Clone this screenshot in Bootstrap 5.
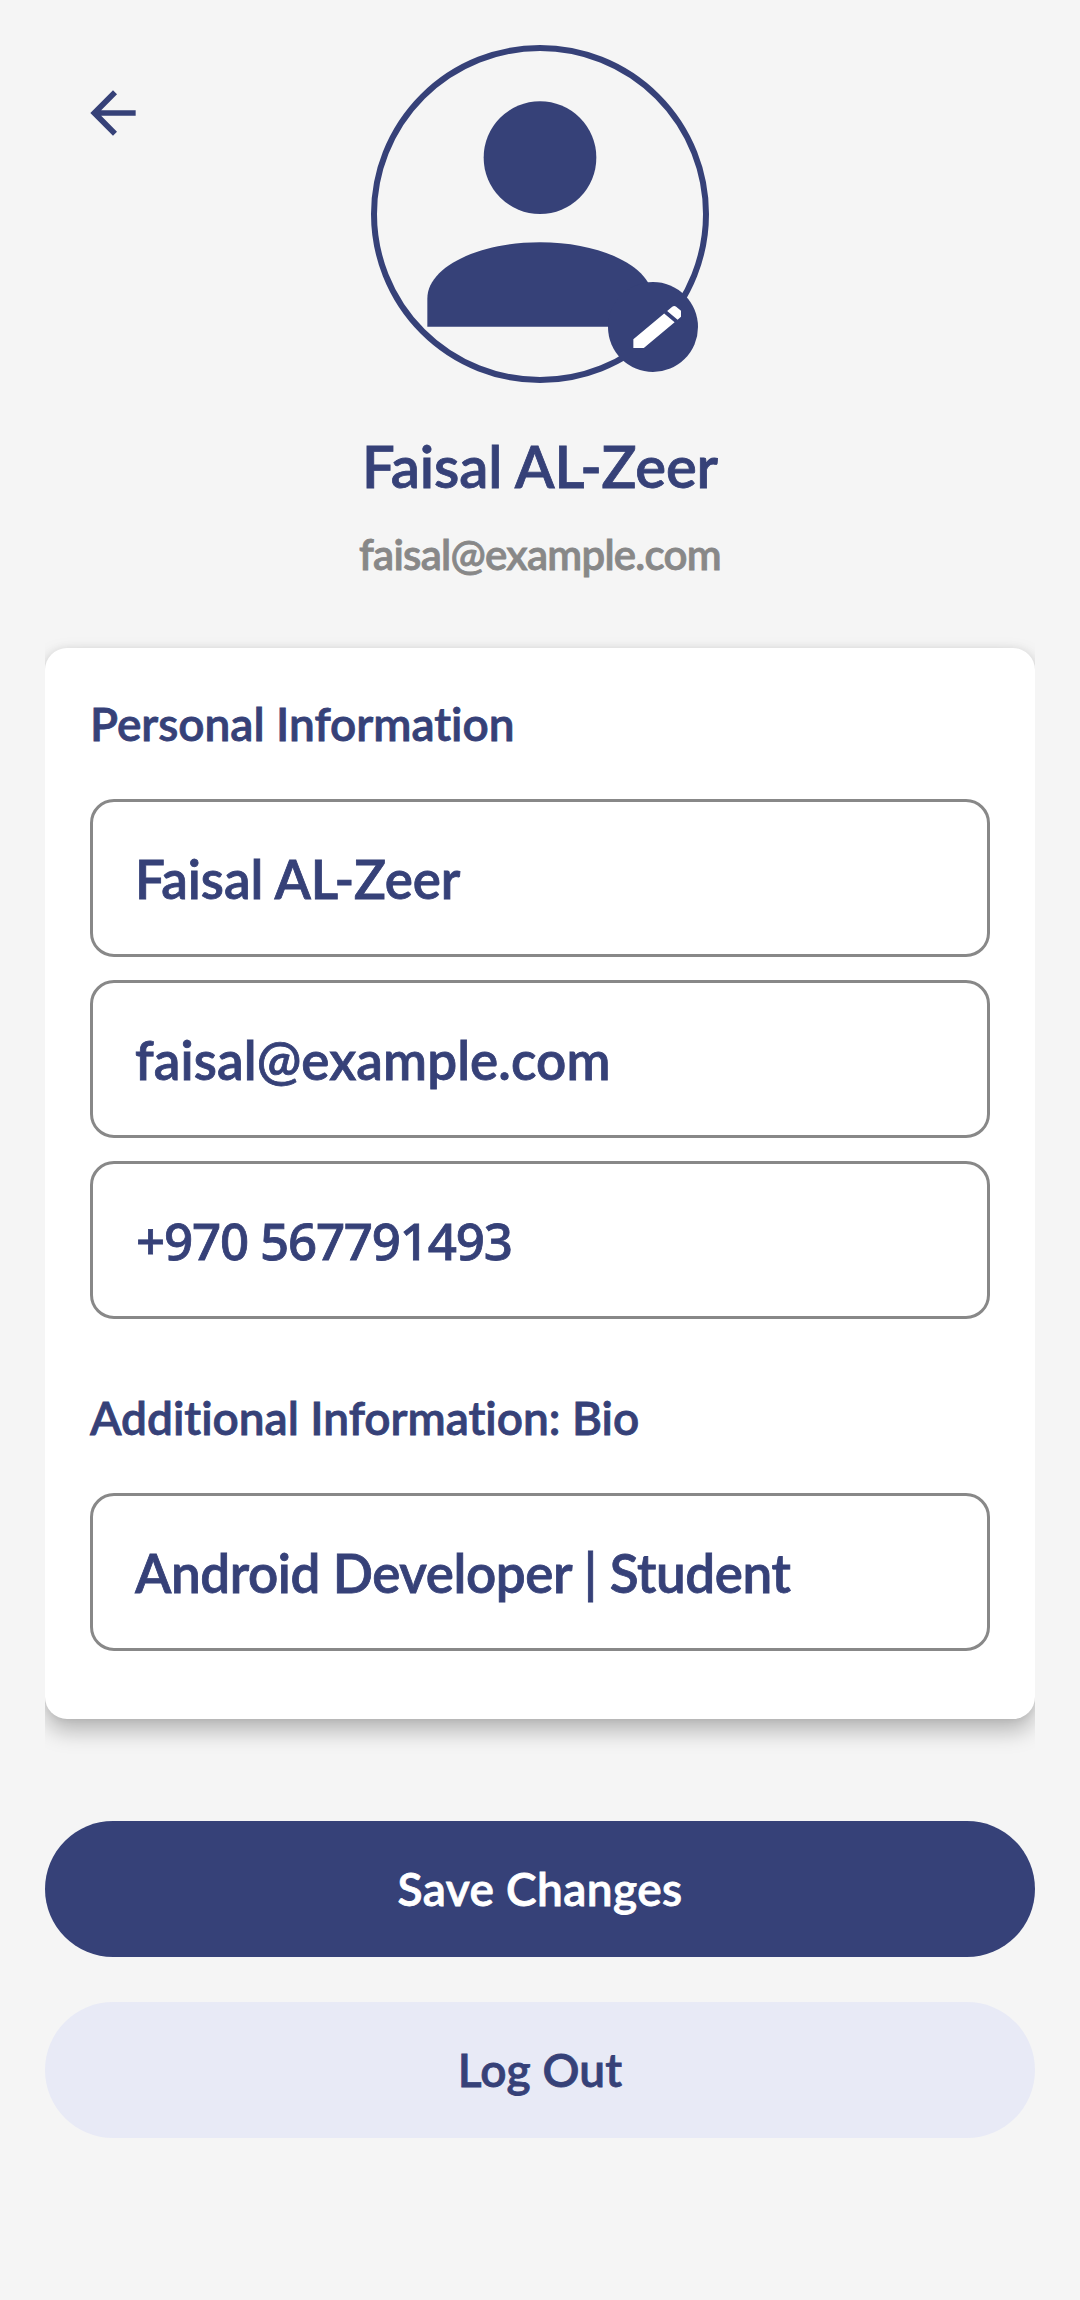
<!DOCTYPE html>
<html lang="en">
<head>
<meta charset="utf-8">
<meta name="viewport" content="width=device-width, initial-scale=1">
<title>Profile</title>
<link href="https://cdn.jsdelivr.net/npm/bootstrap@5.3.0/dist/css/bootstrap.min.css" rel="stylesheet">
<style>
:root { --navy: #364178; --muted: #888; }
body { background: #f5f5f5; color: var(--navy); font-family: Lato, "Noto Sans", sans-serif; font-weight: 600; font-variant-ligatures: none; -webkit-text-stroke: .8px; }
.screen { width: 1080px; height: 2300px; padding: 45px 45px 0; }
svg { display: block; }
.back-btn { top: 34px; left: 34px; padding: 45px; }
.avatar { width: 338px; height: 338px; border: 6px solid var(--navy); }
.avatar > svg { margin: -6px; }
.back-btn svg, .avatar-box svg { -webkit-text-stroke: 0; }
.edit-btn { width: 90px; height: 90px; right: 11px; bottom: 11px; background: var(--navy); padding: 17px; }
.avatar-box { width: 338px; }
.user-name { font-size: 58px; line-height: 80px; letter-spacing: -.1px; margin-top: 43px; font-weight: 600; }
.user-mail { font-size: 42px; line-height: 56px; letter-spacing: -.75px; margin-top: 20px; color: var(--muted); }
.info-card { margin-top: 66px; height: 1071px; padding: 46px 45px 44px; border-radius: 22px; box-shadow: 0 12px 22px rgba(0,0,0,.26), 0 0 8px rgba(0,0,0,.08); }
.card-clip { clip-path: inset(-30px 0 -50px 0); }
.info-title { font-size: 46px; line-height: 60px; margin-bottom: 45px; font-weight: 600; }
.info-title.bio { margin-top: 69px; }
.field { height: 158px; border: 3px solid var(--muted); border-radius: 24px; padding: 1px 42px 0; font-size: 53px; font-weight: 600; color: var(--navy); letter-spacing: -.08px; white-space: nowrap; }
.field + .field { margin-top: 23px; }
.field-mail { letter-spacing: .1px; }
.field-phone { font-family: "Noto Sans", sans-serif; font-size: 51px; font-weight: 500; letter-spacing: -1.2px; padding-left: 43px; }
.field-bio { letter-spacing: -.42px; }
.actions { margin-top: 102px; gap: 45px; }
.pill { height: 136px; border: 0; font-size: 46px; font-weight: 600; line-height: 60px; padding: 0; -webkit-text-stroke: .8px; }
.pill-save { background: var(--navy); color: #fff; letter-spacing: .4px; }
.pill-out { background: #e8eaf6; color: var(--navy); letter-spacing: .2px; }
</style>
</head>
<body>
<main class="screen position-relative d-flex flex-column">
  <a href="#" class="back-btn position-absolute" aria-label="Back">
    <svg width="68" height="68" viewBox="0 0 24 24" fill="#364178"><path d="M20 11H7.83l5.59-5.59L12 4l-8 8 8 8 1.41-1.41L7.83 13H20z"/></svg>
  </a>

  <header class="d-flex flex-column align-items-center text-center">
    <div class="avatar-box position-relative">
      <div class="avatar rounded-circle">
        <svg width="338" height="338" viewBox="0 0 24 24" fill="#364178"><circle cx="12" cy="8" r="4"/><path d="M12 14c-4.42 0-8 1.79-8 4v2h16v-2c0-2.21-3.58-4-8-4z"/></svg>
      </div>
      <a href="#" class="edit-btn position-absolute rounded-circle" aria-label="Edit photo">
        <svg width="56" height="56" viewBox="0 0 20.1 24" preserveAspectRatio="none" fill="#fff"><path d="M3 17.25V21h3.75L17.81 9.94l-3.75-3.75zM20.71 7.04c.39-.39.39-1.02 0-1.41l-2.34-2.34c-.39-.39-1.02-.39-1.41 0l-1.83 1.83 3.75 3.75z"/></svg>
      </a>
    </div>
    <h1 class="user-name mb-0">Faisal AL-Zeer</h1>
    <p class="user-mail mb-0">faisal@example.com</p>
  </header>

  <div class="card-clip">
    <section class="info-card card border-0 bg-white">
      <h2 class="info-title">Personal Information</h2>
      <div class="field form-control d-flex align-items-center">Faisal AL-Zeer</div>
      <div class="field field-mail form-control d-flex align-items-center">faisal@example.com</div>
      <div class="field field-phone form-control d-flex align-items-center">+970 567791493</div>
      <h2 class="info-title bio">Additional Information: Bio</h2>
      <div class="field field-bio form-control d-flex align-items-center">Android Developer | Student</div>
    </section>
  </div>

  <div class="actions d-grid">
    <button type="button" class="pill pill-save btn rounded-pill">Save Changes</button>
    <button type="button" class="pill pill-out btn rounded-pill">Log Out</button>
  </div>
</main>
<script src="https://cdn.jsdelivr.net/npm/bootstrap@5.3.0/dist/js/bootstrap.bundle.min.js"></script>
</body>
</html>
